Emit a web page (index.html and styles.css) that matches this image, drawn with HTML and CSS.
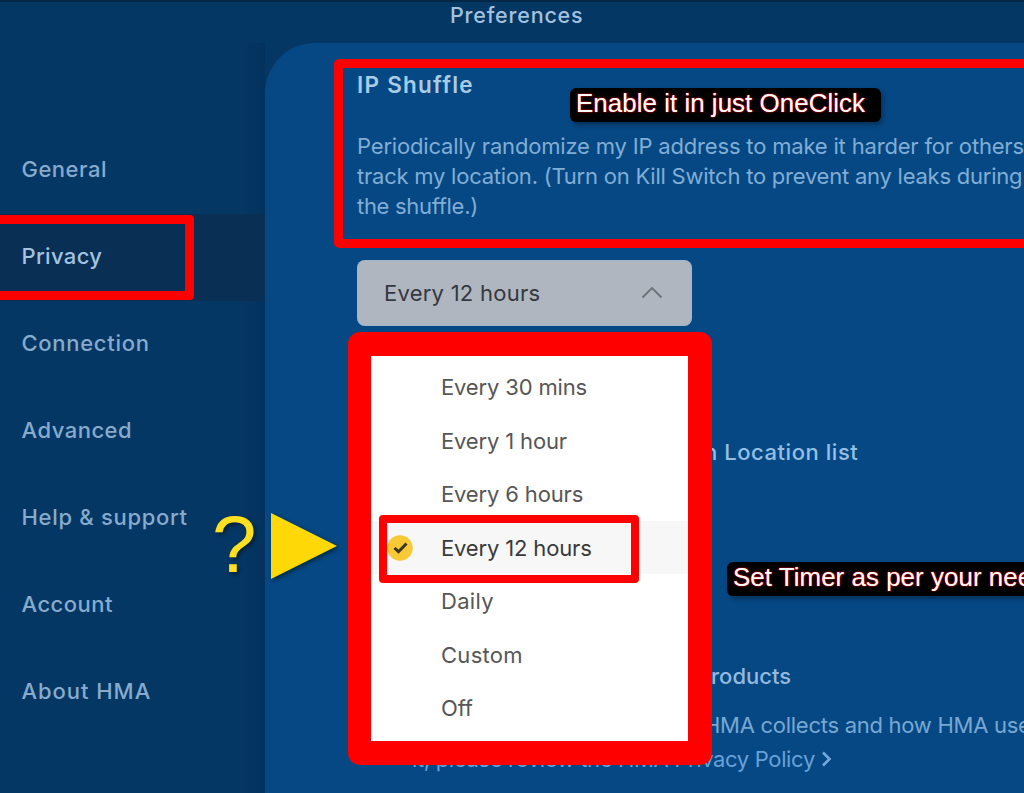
FILE: index.html
```html
<!DOCTYPE html>
<html lang="en">
<head>
    <meta charset="UTF-8">
    <meta name="viewport" content="width=device-width, initial-scale=1.0">
    <title>Preferences</title>
    <link rel="stylesheet" href="styles.css">
</head>
<body>
    <div class="window">
        <header class="titlebar">
            <h1>Preferences</h1>
        </header>

        <div class="layout">
            <nav class="sidebar">
                <a class="nav-item general">General</a>
                <a class="nav-item privacy active">Privacy</a>
                <a class="nav-item connection">Connection</a>
                <a class="nav-item advanced">Advanced</a>
                <a class="nav-item help">Help &amp; support</a>
                <a class="nav-item account">Account</a>
                <a class="nav-item about">About HMA</a>
            </nav>

            <main class="content">
                <section class="shuffle">
                    <h2>IP Shuffle</h2>
                    <p class="description">
                        <span class="line-1">Periodically randomize my IP address to make it harder for others</span><br>
                        <span class="line-2">track my location. (Turn on Kill Switch to prevent any leaks during</span><br>
                        <span class="line-3">the shuffle.)</span>
                    </p>
                    <span class="callout callout-enable">Enable it in just OneClick</span>
                </section>

                <div class="select">
                    <span class="select-value">Every 12 hours</span>
                    <svg class="chevron" width="22" height="14" viewBox="0 0 22 14">
                        <path d="M1.5 11.5 L11 2 L20.5 11.5" fill="none" stroke="#6d7278" stroke-width="1.8"/>
                    </svg>

                    <ul class="menu">
                        <li class="opt-30">Every 30 mins</li>
                        <li class="opt-1">Every 1 hour</li>
                        <li class="opt-6">Every 6 hours</li>
                        <li class="opt-12 selected">
                            <svg class="check" width="26" height="26" viewBox="0 0 26 26">
                                <circle cx="13" cy="13" r="12.7" fill="#f6c935"/>
                                <path d="M7.5 13 L11.5 16.7 L19.5 8.5" fill="none" stroke="#39351f" stroke-width="3"/>
                            </svg>
                            Every 12 hours
                        </li>
                        <li class="opt-daily">Daily</li>
                        <li class="opt-custom">Custom</li>
                        <li class="opt-off">Off</li>
                    </ul>
                </div>

                <h3 class="location">n Location list</h3>
                <div class="toggle"></div>
                <h3 class="products">roducts</h3>
                <p class="policy-text">HMA collects and how HMA use</p>
                <p class="policy-link">
                    <span>it, please review the HMA Privacy Policy</span>
                    <svg width="11" height="18" viewBox="0 0 11 18">
                        <path d="M2 2.5 L8.5 9 L2 15.5" fill="none" stroke="#72a9dc" stroke-width="2.6"/>
                    </svg>
                </p>
            </main>
        </div>

        <div class="pointer">
            <span class="question">?</span>
            <svg width="68" height="70" viewBox="0 0 68 70">
                <path d="M1 1 L67 34 L1 67 Z" fill="#ffd808"/>
            </svg>
        </div>
        <span class="callout callout-timer">Set Timer as per your nee</span>
    </div>
</body>
</html>
```
FILE: styles.css
```css
:root {
    --navy: #053765;
    --navy-active: #092f54;
    --panel: #064884;
    --text-nav: #86abcd;
    --mark: #ff0000;
}

*,
*::after {
    margin: 0;
    padding: 0;
    box-sizing: border-box;
}

body {
    background: var(--navy);
    font-family: Inter, "Open Sans", sans-serif;
    font-size: 22px;
    overflow: hidden;
}

.window {
    position: relative;
    width: 1024px;
    height: 793px;
    overflow: hidden;
    white-space: nowrap;
}

.titlebar {
    height: 43px;
    padding-left: 450px;
    border-top: 2px solid #052747;
}

.titlebar h1 {
    font-size: 21.5px;
    font-weight: 500;
    line-height: 26px;
    letter-spacing: 0.8px;
    color: #a3c2df;
}

.layout {
    display: flex;
    height: 750px;
}

/* Sidebar */
.sidebar {
    width: 265px;
    padding-top: 84px;
    flex-shrink: 0;
    background: linear-gradient(90deg, transparent 240px, rgba(0,40,80,0.35) 265px);
}

.nav-item {
    display: block;
    height: 87px;
    padding-left: 21.5px;
    line-height: 85px;
    font-weight: 500;
    letter-spacing: 0.5px;
    color: var(--text-nav);
}

.nav-item.connection,
.nav-item.help {
    letter-spacing: 0.7px;
}

.nav-item.about {
    letter-spacing: 0.95px;
}

.nav-item.active {
    position: relative;
    background: var(--navy-active);
    letter-spacing: 0.35px;
    color: #a3c3e0;
}

.nav-item.active::after {
    content: "";
    position: absolute;
    left: -10px;
    top: 1px;
    width: 204px;
    height: 85px;
    border: 9px solid var(--mark);
    border-radius: 4px;
}

/* Content */
.content {
    width: 759px;
    flex-shrink: 0;
    padding: 16px 0 0 69px;
    background: var(--panel);
    border-top-left-radius: 50px;
    overflow: hidden;
}

.shuffle {
    position: relative;
    width: 750px;
    height: 189px;
    padding: 3px 0 0 14px;
    border: 9px solid var(--mark);
    border-radius: 5px;
}

.shuffle h2 {
    font-size: 22.5px;
    font-weight: 600;
    line-height: 28px;
    letter-spacing: 1.25px;
    color: #a8cbe6;
}

.description {
    margin-top: 32px;
    line-height: 30px;
    color: #80aed5;
}

.line-1 {
    letter-spacing: -0.18px;
}

.line-2 {
    letter-spacing: -0.23px;
}

.line-3 {
    letter-spacing: -0.3px;
}

.callout {
    position: absolute;
    height: 34px;
    padding: 0 17px 0 6px;
    border-radius: 6px;
    background: #000;
    color: #fff;
    font-family: "Liberation Sans", Arial, sans-serif;
    font-size: 26px;
    line-height: 30px;
    text-shadow: 0 0 1px #f00, 0 0 2px #f00;
    box-shadow: 2px 3px 4px rgba(0,0,0,0.3);
}

.callout-enable {
    left: 227px;
    top: 20px;
    width: 311px;
}

.callout-timer {
    left: 727px;
    top: 562px;
    width: 320px;
}

/* Select */
.select {
    position: relative;
    display: flex;
    align-items: center;
    justify-content: space-between;
    width: 335px;
    height: 66px;
    margin: 12px 0 0 23px;
    padding: 0 29px 0 27px;
    border-radius: 8px;
    background: #b0b6bf;
    box-shadow: inset 0 0 2px #86b5e4;
    color: #34383f;
}

.select-value {
    letter-spacing: 0.25px;
}

.menu {
    position: absolute;
    z-index: 1;
    left: -9px;
    top: 72px;
    width: 364px;
    height: 433px;
    padding-top: 4px;
    border: 24px solid var(--mark);
    border-left-width: 23px;
    border-radius: 12px;
    background: #fff;
    list-style: none;
    color: #565656;
}

.menu li {
    height: 53.5px;
    padding-left: 70px;
    line-height: 54px;
    letter-spacing: -0.15px;
}

.menu li.opt-daily,
.menu li.opt-custom {
    letter-spacing: 0.3px;
}

.menu li.selected {
    position: relative;
    background: #f7f7f7;
    color: #3a3a3a;
}

.menu li.selected::after {
    content: "";
    position: absolute;
    left: 8px;
    top: -6px;
    width: 260px;
    height: 68px;
    border: 8.5px solid var(--mark);
    border-radius: 4px;
}

.check {
    position: absolute;
    left: 16px;
    top: 14px;
}

/* Settings below the select */
.location {
    margin: 112px 0 0 370px;
    font-size: 22px;
    font-weight: 500;
    line-height: 28px;
    letter-spacing: 0.55px;
    color: #93c0e2;
}

.toggle {
    width: 59px;
    height: 32px;
    margin: 43px 0 0 319px;
    border-radius: 16px;
    background: #6c7b43;
}

.products {
    margin: 121px 0 0 377px;
    font-size: 22px;
    font-weight: 500;
    line-height: 28px;
    color: #93b9df;
}

.policy-text {
    margin: 18px 0 0 370px;
    line-height: 34px;
    letter-spacing: -0.27px;
    color: #78a8d2;
}

.policy-link {
    display: flex;
    align-items: center;
    gap: 6px;
    padding-left: 78px;
    line-height: 34px;
    letter-spacing: -0.35px;
    color: #66a2d8;
}

/* Yellow pointer */
.pointer {
    position: absolute;
    left: 212px;
    top: 505px;
    display: flex;
    align-items: center;
    color: #ffe01e;
    filter: drop-shadow(2px 2px 2px rgba(0,0,0,0.45));
}

.pointer svg {
    margin-top: 4px;
}

.question {
    width: 58px;
    font-family: "Liberation Sans", Arial, sans-serif;
    font-size: 80px;
    line-height: 80px;
}
```
